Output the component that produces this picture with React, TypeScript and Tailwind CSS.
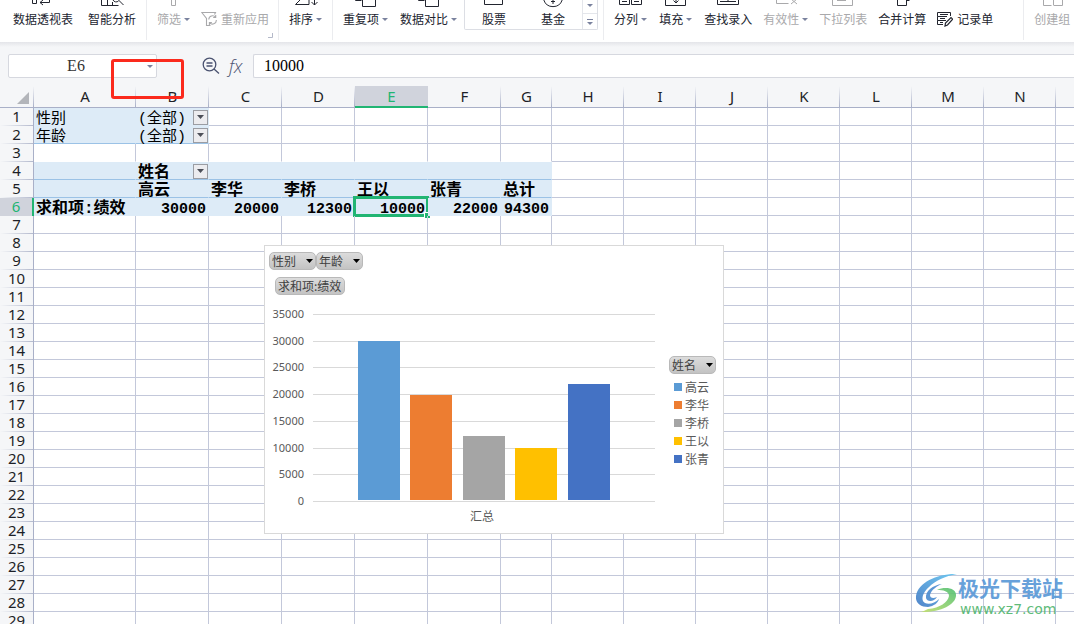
import type { ReactNode } from "react";

const COLUMNS = [
  { name: "A", width: 102 },
  { name: "B", width: 73 },
  { name: "C", width: 73 },
  { name: "D", width: 73 },
  { name: "E", width: 73 },
  { name: "F", width: 73 },
  { name: "G", width: 51 },
  { name: "H", width: 72 },
  { name: "I", width: 72 },
  { name: "J", width: 72 },
  { name: "K", width: 72 },
  { name: "L", width: 72 },
  { name: "M", width: 72 },
  { name: "N", width: 72 },
];

const ROWS = Array.from({ length: 29 }, (_, i) => i + 1);

const CELLS: Record<string, string> = {
  A1: "性别",
  B1: "(全部)",
  A2: "年龄",
  B2: "(全部)",
  B4: "姓名",
  B5: "高云",
  C5: "李华",
  D5: "李桥",
  E5: "王以",
  F5: "张青",
  G5: "总计",
  A6: "求和项:绩效",
  B6: "30000",
  C6: "20000",
  D6: "12300",
  E6: "10000",
  F6: "22000",
  G6: "94300",
};

const FILTER_CELLS = ["B1", "B2", "B4"];

const SERIES = [
  { name: "高云", value: 30000, color: "#5b9bd5" },
  { name: "李华", value: 20000, color: "#ed7d31" },
  { name: "李桥", value: 12300, color: "#a5a5a5" },
  { name: "王以", value: 10000, color: "#ffc000" },
  { name: "张青", value: 22000, color: "#4472c4" },
];

const TICKS = [35000, 30000, 25000, 20000, 15000, 10000, 5000, 0];

/* ---------- Ribbon ---------- */

function Caret({ className = "h-[3px] w-[6px] text-[#7a829e]" }: { className?: string }) {
  return (
    <svg viewBox="0 0 6 3" preserveAspectRatio="none" className={`shrink-0 ${className}`}>
      <path d="M0 0h6L3 3z" fill="currentColor" />
    </svg>
  );
}

function RibbonButton({
  label,
  caret,
  disabled,
  children,
}: {
  label: string;
  caret?: boolean;
  disabled?: boolean;
  children?: ReactNode;
}) {
  return (
    <button
      disabled={disabled}
      className={`flex shrink-0 flex-col whitespace-nowrap ${disabled ? "text-[#a9a9ab]" : "text-[#22252f]"}`}
    >
      <svg
        viewBox="0 0 24 8"
        className="mx-auto h-[8px] w-[24px]"
        fill="none"
        stroke="currentColor"
      >
        {children}
      </svg>
      <span className="mt-[2px] flex items-center gap-[3px] leading-[18px]">
        {label}
        {caret && <Caret />}
      </span>
    </button>
  );
}

function RibbonGroup({ className, children }: { className: string; children: ReactNode }) {
  return (
    <div className={`flex h-[40px] shrink-0 items-start border-r border-[#ebecef] ${className}`}>
      {children}
    </div>
  );
}

function Ribbon() {
  return (
    <header className="relative z-10 flex h-[42px] shrink-0 overflow-hidden bg-white text-[12px]">
      <RibbonGroup className="gap-[15px] pl-[13px] pr-[10px]">
        <RibbonButton label="数据透视表">
          <path d="M1.5 0v3.5h4V0M9 2.5h9.5V0M12 0L9 2.5 12 5" />
        </RibbonButton>
        <RibbonButton label="智能分析">
          <path d="M1.5 0v5.5h17M7.5 0v5.5M12.5 2v3.5M18.500 0l5 5" />
          <path d="M13 0a3.500 3.500 0 0 0 5.500 1" />
        </RibbonButton>
      </RibbonGroup>
      <RibbonGroup className="relative gap-[11px] pl-[10px] pr-[9px]">
        <RibbonButton label="筛选" caret disabled>
          <path d="M9.5 0v5.5h4V0" />
        </RibbonButton>
        <button disabled className="mt-[10px] flex h-[18px] items-center gap-1 whitespace-nowrap text-[#a9a9ab]">
          <svg viewBox="0 0 16 16" className="h-4 w-4" fill="none" stroke="currentColor" strokeWidth="1.1">
            <path d="M9.500 14.5H5.500V7.500L.8 1.500H14.500L13.500 3.500" />
            <path d="M7.800 8.500a3.800 3.800 0 0 1 6.800-2.200M15.300 9a3.800 3.800 0 0 1-6.800 2.600M14.700 4v2.500h-2.500M8.400 14v-2.500h2.500" />
          </svg>
          重新应用
        </button>
        <svg viewBox="0 0 5 5" className="absolute right-[5px] bottom-[2px] h-[5px] w-[5px]" fill="none" stroke="#b4b9c9">
          <path d="M0 4.500h4.500V0" />
        </svg>
      </RibbonGroup>
      <RibbonGroup className="px-[10px]">
        <RibbonButton label="排序" caret>
          <path d="M6 0L1.500 4.500H15V0M20.500 0v5M17.500 2l3 3 3-3" />
        </RibbonButton>
      </RibbonGroup>
      <RibbonGroup className="gap-[12px] pl-[10px] pr-[5px]">
        <RibbonButton label="重复项" caret>
          <path d="M1.500 0v.5h6M8.500 0v6.500h13V0" />
        </RibbonButton>
        <RibbonButton label="数据对比" caret>
          <path d="M1.500 0v.5h6M8.500 0v6.500h13V0" />
        </RibbonButton>
        <div className="-ml-[5px] flex h-[30px] w-[134px] rounded-b-[2px] border border-t-0 border-[#dcdee4]">
          <div className="flex flex-1 justify-between px-[17px]">
            <RibbonButton label="股票">
              <path d="M2.500 0v4.500h18V0" />
            </RibbonButton>
            <RibbonButton label="基金">
              <path d="M2.800 0a9.700 9.700 0 0 0 18.400 0M12 0v4M10 1.500h4" />
            </RibbonButton>
          </div>
          <div className="flex w-[15px] flex-col border-l border-[#e4e6eb]">
            <button aria-label="向下滚动" className="flex h-[14px] items-center justify-center border-b border-[#e4e6eb] pb-[3px]">
              <Caret />
            </button>
            <button aria-label="更多" className="flex flex-1 flex-col items-center justify-center gap-[2px]">
              <span className="h-px w-[6px] bg-[#7a829e]" />
              <Caret />
            </button>
          </div>
        </div>
      </RibbonGroup>
      <RibbonGroup className="gap-[11px] pl-[10px] pr-[30px]">
        <div className="flex gap-[12px]">
          <RibbonButton label="分列" caret>
            <path d="M.5 0v4.500h10V0M12.500 0v4.500h10V0M3 1.500h5M15 1.500h5" />
          </RibbonButton>
          <RibbonButton label="填充" caret>
            <path d="M1.500 0v5.500h20V0M12 0v3M9.500 .5l2.500 2.500 2.500-2.500" />
          </RibbonButton>
          <RibbonButton label="查找录入">
            <path d="M1.500 0v4.500h21V0M4 1.500h16M12 0v2" />
          </RibbonButton>
        </div>
        <RibbonButton label="有效性" caret disabled>
          <path d="M2.500 0v3.500h12M17 4l6-5M17-1l6 5" />
        </RibbonButton>
        <RibbonButton label="下拉列表" disabled>
          <path d="M1.500 0v5.500h20V0M6 .5h9" />
        </RibbonButton>
        <RibbonButton label="合并计算">
          <path d="M7.500 0v5.500h9V0M16.500 .5h3" />
        </RibbonButton>
        <button className="mt-[10px] flex h-[18px] items-center gap-1 whitespace-nowrap text-[#22252f]">
          <svg viewBox="0 0 16 16" className="h-4 w-4" fill="none" stroke="currentColor">
            <path d="M13.500 5V1.500H.5V5.500H10M.5 5.500V9.500H9M.5 9.500V13.500H6M3 3.500h8M3 7.500h5M3 11.500h3" />
            <path d="M8 15l.5-3 5.500-5.500 1.700 1.700L10.500 14z" strokeWidth="1.200" />
          </svg>
          记录单
        </button>
      </RibbonGroup>
      <div className="flex pl-[10px]">
        <RibbonButton label="创建组" disabled>
          <path d="M3.500 0v5.500h8M14 5.500h8.500V0M13.500 0v5.500" />
        </RibbonButton>
      </div>
    </header>
  );
}

/* ---------- Formula bar ---------- */

function FormulaBar() {
  return (
    <div className="flex h-[44px] shrink-0 items-start bg-[linear-gradient(to_bottom,#e4e5e9,#f5f6f8_5px)] pt-3 pl-2">
      <div className="flex h-[24px] w-[149px] shrink-0 items-center rounded-[2px] border border-[#d6d8df] bg-white">
        <input
          aria-label="名称框"
          defaultValue="E6"
          className="h-full w-[134px] bg-transparent text-center font-['Liberation_Serif',serif] text-[16px] text-[#333] outline-none"
        />
        <button aria-label="选择名称" className="flex h-full flex-1 items-center justify-center">
          <Caret />
        </button>
      </div>
      <div className="flex h-[24px] w-[96px] shrink-0 items-center gap-[9px] pl-[45px] text-[#4a5270]">
        <button aria-label="缩小">
          <svg viewBox="0 0 18 18" className="h-[18px] w-[18px]" fill="none" stroke="currentColor" strokeWidth="1.300">
            <circle cx="7.500" cy="7.500" r="6.300" />
            <path d="M4.500 6h6M4.500 9h6M12 12l5 4.500" />
          </svg>
        </button>
        <button
          aria-label="插入函数"
          className="font-['Open_Sans',sans-serif] text-[18px] leading-[24px] font-light italic"
        >
          fx
        </button>
      </div>
      <input
        aria-label="编辑栏"
        defaultValue="10000"
        className="h-[24px] min-w-0 flex-1 rounded-l-[2px] border border-r-0 border-[#d6d8df] bg-white pl-[10px] font-['Liberation_Serif',serif] text-[16px] text-black outline-none"
      />
    </div>
  );
}

/* ---------- Sheet ---------- */

function cellStyle(col: number, row: number) {
  if (col < 2 && row === 1) return "bg-[#ddebf7] border-[#ddebf7]";
  if (col < 2 && row === 2) return "bg-[#ddebf7] border-r-[#ddebf7] border-b-[#9bc2e6]";
  if (col < 7 && row === 3) return "border-r-[#c3c8da] border-b-white";
  if (col < 7 && (row === 4 || row === 5)) return "bg-[#ddebf7] border-r-[#ddebf7] border-b-[#9bc2e6]";
  if (col < 7 && row === 6) return "bg-[#ddebf7] border-[#ddebf7]";
  return "border-[#c3c8da]";
}

function cellFont(id: string, row: number) {
  if (row < 4) return "text-[15px]";
  return /^[B-G]6$/.test(id) ? "text-[15px] font-bold justify-end" : "text-[16px] font-bold";
}

function Cell({ col, row }: { col: number; row: number }) {
  const id = `${COLUMNS[col].name}${row}`;
  const text = CELLS[id];
  const selected = id === "E6";

  return (
    <td className={`relative h-[18px] border-r border-b p-0 ${cellStyle(col, row)}`}>
      {text && (
        <div
          className={`flex h-[17px] items-center px-[2px] whitespace-nowrap text-black font-['Liberation_Mono','Noto_Sans_CJK_SC',monospace] ${cellFont(id, row)}`}
        >
          <span className="pt-[5px] leading-[17px]">{text}</span>
          {FILTER_CELLS.includes(id) && (
            <button
              aria-label="筛选"
              className="-mr-[2px] mt-px ml-auto flex h-[15px] w-[15px] items-center justify-center border border-[#9b9da3] bg-[#ececef]"
            >
              <Caret className="h-[4px] w-[7px] text-[#4c4f58]" />
            </button>
          )}
        </div>
      )}
      {selected && (
        <div className="absolute -top-[2px] -right-[2px] -bottom-[2px] -left-[2px] border-[3px] border-[#21b573]">
          <span className="absolute -right-[4px] -bottom-[4px] h-[6px] w-[6px] border-t border-l border-white bg-[#21b573]" />
        </div>
      )}
    </td>
  );
}

function SheetTable() {
  return (
    <table className="w-full table-fixed border-separate border-spacing-0">
      <colgroup>
        <col className="w-[34px]" />
        {COLUMNS.map((c) => (
          <col key={c.name} style={{ width: c.width }} />
        ))}
        <col />
      </colgroup>
      <thead>
        <tr className="bg-[#f5f6f8] font-['Noto_Sans',sans-serif] text-[15px]">
          <th className="h-[22px] border-b border-[#a9b0c8] bg-[linear-gradient(to_bottom,transparent,#a9b0c8)] bg-[length:1px_100%] bg-right bg-no-repeat p-0">
            <svg viewBox="0 0 12 12" className="mt-[2px] ml-[17px] h-3 w-3">
              <path d="M12 0v12H0z" fill="#b3b5ba" />
            </svg>
          </th>
          {COLUMNS.map((c) => (
            <th
              key={c.name}
              scope="col"
              className={`h-[22px] p-0 leading-[19px] font-normal ${
                c.name === "E"
                  ? "border-b-2 border-[#21b573] bg-[#d0d3dc] text-[#21b573]"
                  : "border-b border-[#a9b0c8] bg-[linear-gradient(to_bottom,transparent,#a9b0c8)] bg-[length:1px_100%] bg-right bg-no-repeat text-[#1d1f27]"
              }`}
            >
              {c.name}
            </th>
          ))}
          <th className="border-b border-[#a9b0c8]" />
        </tr>
      </thead>
      <tbody>
        {ROWS.map((row) => (
          <tr key={row}>
            <th
              scope="row"
              className={`h-[18px] p-0 text-center font-['Noto_Sans',sans-serif] text-[15px] leading-[15px] font-normal ${
                row === 6
                  ? "border-r-2 border-[#21b573] bg-[#d0d3dc] pb-[2px] text-[#21b573]"
                  : "border-r border-[#a9b0c8] bg-[#f5f6f8] bg-[linear-gradient(to_right,transparent,#b4bace)] bg-[length:100%_1px] bg-bottom bg-no-repeat pb-[2px] text-[#1d1f27]"
              }`}
            >
              {row}
            </th>
            {COLUMNS.map((c, i) => (
              <Cell key={c.name} col={i} row={row} />
            ))}
            <td className="border-b border-[#c3c8da] p-0" />
          </tr>
        ))}
      </tbody>
    </table>
  );
}

/* ---------- Pivot chart ---------- */

function FieldButton({ label, caret }: { label: string; caret?: boolean }) {
  return (
    <button
      className={`flex h-[18px] items-center justify-between rounded-[5px] border border-[#b9b9b9] bg-linear-to-b from-[#dcdcdc] to-[#c3c3c3] px-[2px] whitespace-nowrap text-[#404040] ${caret ? "w-[47px]" : "w-[70px]"}`}
    >
      {label}
      {caret && <Caret className="h-[4px] w-[7px] text-black" />}
    </button>
  );
}

function Plot() {
  const base = 198.5;
  const scale = 187 / 35000;

  return (
    <svg viewBox="0 0 390 226" className="h-[226px] w-[390px]" role="img" aria-label="求和项:绩效">
      {TICKS.map((t) => {
        const y = Math.floor(base - t * scale) + 0.5;
        return (
          <g key={t}>
            <path d={`M44 ${y}H386`} stroke="#d9d9d9" />
            <text
              x="35"
              y={y + 3}
              textAnchor="end"
              fill="#595959"
              className="font-['Noto_Sans',sans-serif] text-[11px]"
            >
              {t}
            </text>
          </g>
        );
      })}
      {SERIES.map((s, i) => {
        const top = Math.ceil(198 - s.value * scale);
        return (
          <rect
            key={s.name}
            x={Math.floor(89 + i * 52.5)}
            y={top}
            width="42"
            height={197 - top}
            fill={s.color}
          />
        );
      })}
      <text x="213" y="218" textAnchor="middle" fill="#595959" className="text-[12px]">
        汇总
      </text>
    </svg>
  );
}

function PivotChart() {
  return (
    <section className="absolute top-[159px] left-[264px] flex h-[289px] w-[460px] border border-[#d9d9d9] bg-white pl-1 text-[12px]">
      <div className="w-[400px] shrink-0 pt-[6px]">
        <div className="flex">
          <FieldButton label="性别" caret />
          <FieldButton label="年龄" caret />
        </div>
        <div className="mt-[7px] mb-2 ml-[6px]">
          <FieldButton label="求和项:绩效" />
        </div>
        <Plot />
      </div>
      <div className="pt-[110px]">
        <FieldButton label="姓名" caret />
        <ul className="mt-[4px] ml-[5px] text-[#595959]">
          {SERIES.map((s) => (
            <li key={s.name} className="flex h-[18px] items-center gap-[3px] leading-[18px] whitespace-nowrap">
              <span className="h-2 w-2" style={{ backgroundColor: s.color }} />
              {s.name}
            </li>
          ))}
        </ul>
      </div>
    </section>
  );
}

function Watermark() {
  return (
    <div className="absolute right-[11px] bottom-[5px] flex items-center opacity-90">
      <svg viewBox="0 0 43 40" className="mb-[6px] h-[40px] w-[43px]">
        <defs>
          <linearGradient id="swoosh-blue" x1="1" y1="0" x2="0" y2="1">
            <stop offset="0" stopColor="#63c6f2" />
            <stop offset="1" stopColor="#3f78c4" />
          </linearGradient>
          <linearGradient id="swoosh-green" x1="1" y1="0" x2="0" y2="1">
            <stop offset="0" stopColor="#4fbf73" />
            <stop offset="1" stopColor="#c5e06a" />
          </linearGradient>
        </defs>
        <path
          d="M42 1C24 0 3 9 1 23c-1 8 6 11 12 11 6-1 10-4 11-8-4 4-10 6-14 4-5-3-2-11 4-16C20 8 30 3 42 1z"
          fill="url(#swoosh-blue)"
        />
        <path
          d="M27 11c-9 1-17 7-16 14 1 4 8 4 11-1-4 2-7 1-7-2 1-5 7-9 12-11z"
          fill="#4a8bd0"
        />
        <path
          d="M22 17c8-4 20-2 19 6-1 9-16 17-37 16 4 0 6-2 9-3 12-1 20-7 21-13 0-5-6-6-12-6z"
          fill="url(#swoosh-green)"
        />
      </svg>
      <div className="whitespace-nowrap">
        <div className="text-[21px] leading-[26px] font-bold text-[#5797d6]">极光下载站</div>
        <div className="pl-[2px] font-['DejaVu_Sans',sans-serif] text-[14px] leading-[18px] text-[#4fb56c]">
          www.xz7.com
        </div>
      </div>
    </div>
  );
}

export default function App() {
  return (
    <div className="relative flex h-screen flex-col overflow-hidden bg-white font-['Noto_Sans_CJK_SC',sans-serif]">
      <Ribbon />
      <FormulaBar />
      <main className="relative min-h-0 flex-1 overflow-hidden">
        <SheetTable />
        <PivotChart />
      </main>

      {/* Callout around the name box arrow */}
      <div className="pointer-events-none absolute top-[59px] left-[111px] h-[40px] w-[73px] rounded-[3px] border-[3px] border-[#fb2a1d]" />
      <Watermark />
    </div>
  );
}
